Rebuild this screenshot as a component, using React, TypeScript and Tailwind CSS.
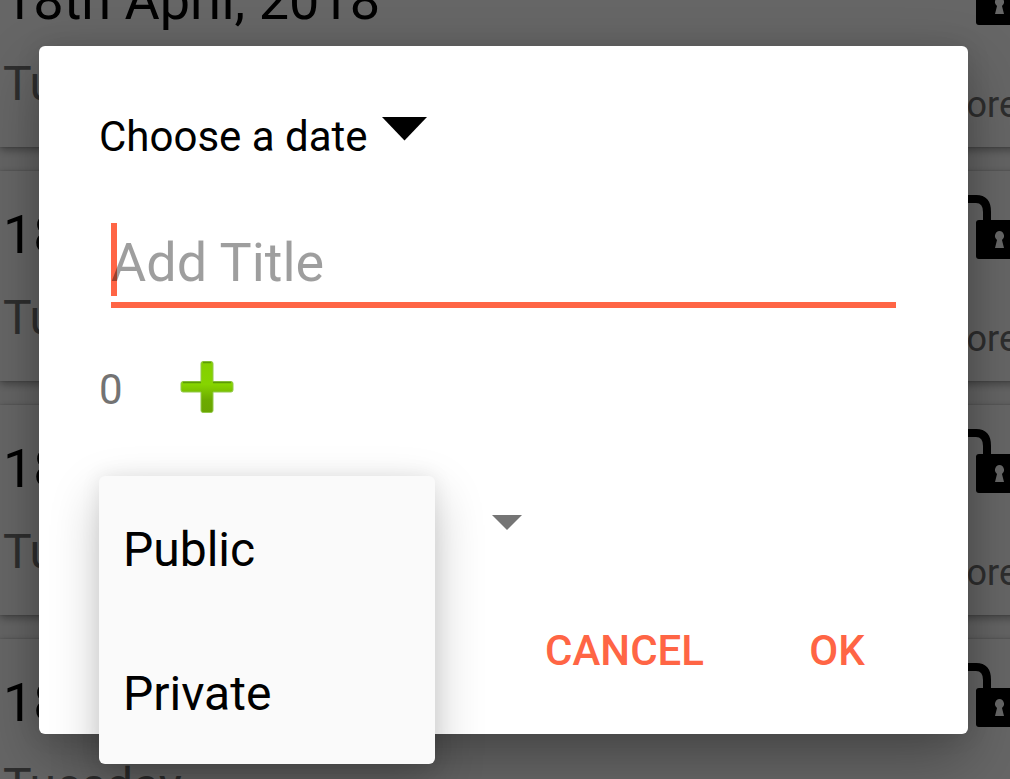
import React, { useState } from "react";

const ENTRIES = [1, 2, 3, 4];

function OpenLock() {
  return (
    <svg width="80" height="64" viewBox="0 0 80 64" aria-hidden="true">
      <path d="M4 26V14Q4 4 15 4H34Q45 4 45 17V28" fill="none" stroke="#000" strokeWidth="8" />
      <path
        fillRule="evenodd"
        d="M37 25H77Q80 25 80 28V61Q80 64 77 64H37Q34 64 34 61V28Q34 25 37 25ZM57.500 36A5 5 0 0 0 55 45L53 53H62L60 45A5 5 0 0 0 57.500 36Z"
      />
    </svg>
  );
}

function EntryCard() {
  return (
    <article className="flex justify-between bg-white pb-[18px] pl-[3px] shadow-[0_3px_8px_rgba(0,0,0,0.35),0_0_2px_rgba(0,0,0,0.2)]">
      <div className="flex flex-col gap-[19px] pt-8">
        <h2 className="text-[54px] leading-[64px] text-black">18th April, 2018</h2>
        <p className="text-[48px] leading-[64px] text-[#737373]">Tuesday</p>
      </div>
      <div className="flex flex-col items-end gap-14 pt-6">
        <OpenLock />
        <a href="#more" className="pr-1 text-[36px] leading-[48px] text-[#737373]">
          more
        </a>
      </div>
    </article>
  );
}

function PlusIcon() {
  return (
    <svg width="54" height="54" viewBox="0 0 54 54" aria-hidden="true">
      <defs>
        <linearGradient id="plus-fill" x1="0" y1="0" x2="0" y2="1">
          <stop offset="0" stopColor="#84cf00" />
          <stop offset="0.45" stopColor="#86d400" />
          <stop offset="0.75" stopColor="#6cab00" />
          <stop offset="1" stopColor="#6aa502" />
        </linearGradient>
      </defs>
      <path
        d="M23 1.500H31Q33 1.500 33 3.500V21.500H51Q53 21.500 53 23.500V30Q53 32 51 32H33V50.500Q33 52.500 31 52.500H23Q21 52.500 21 50.500V32H3Q1 32 1 30V23.500Q1 21.500 3 21.500H21V3.500Q21 1.500 23 1.500Z"
        fill="url(#plus-fill)"
        stroke="#93c94a"
        strokeWidth="1"
      />
      <path d="M23 2.500H31M3 22.500H21M33 22.500H51" stroke="#5c9a08" strokeWidth="1.500" />
    </svg>
  );
}

export default function App() {
  const [visibility, setVisibility] = useState("Public");
  return (
    <div className="relative h-screen overflow-hidden bg-[#fafafa] font-['Roboto',sans-serif]">
      <main className="-mt-[63px] -mr-3 flex flex-col gap-6">
        {ENTRIES.map((id) => (
          <EntryCard key={id} />
        ))}
      </main>

      <div className="absolute inset-0 bg-black/60 pt-[46px] pr-[42px] pl-[39px]">
        <form
          role="dialog"
          aria-label="New entry"
          onSubmit={(e) => e.preventDefault()}
          className="rounded-[6px] bg-white pt-[63px] pb-[46px] shadow-[0_24px_60px_rgba(0,0,0,0.3),0_0_24px_rgba(0,0,0,0.1)]"
        >
          <button type="button" className="ml-[60px] flex items-start gap-[14px] text-[42px] leading-[56px] text-black">
            Choose a date
            <svg width="45" height="24" viewBox="0 0 45 24" className="mt-2" aria-hidden="true">
              <path d="M0 0H45L22.500 23.500Z" />
            </svg>
          </button>

          <div className="relative mt-[58px] mr-[72px] ml-[72px]">
            <span className="absolute top-0 left-0 h-[73px] w-[6px] bg-[#ff6545]" />
            <input
              type="text"
              aria-label="Title"
              placeholder="Add Title"
              className="relative block h-[85px] w-full border-b-6 border-[#ff6545] bg-transparent text-[54px] text-black caret-transparent outline-none placeholder:text-black/38"
            />
          </div>

          <div className="mt-[52px] ml-[60px] flex items-start gap-[57px]">
            <span className="pt-[2px] text-[42px] leading-[56px] text-[#737373]">0</span>
            <button type="button" aria-label="Add">
              <PlusIcon />
            </button>
          </div>

          <div className="relative mt-[58px] ml-[60px]">
            <button
              type="button"
              aria-haspopup="listbox"
              aria-expanded="true"
              aria-label={"Visibility: " + visibility}
              className="flex h-[92px] w-[423px] items-center justify-end"
            >
              <svg width="30" height="15" viewBox="0 0 30 15" aria-hidden="true">
                <path d="M0 0H30L15 15Z" fill="#757575" />
              </svg>
            </button>
            <div
              role="listbox"
              aria-label="Visibility"
              className="absolute top-0 left-0 flex w-[336px] flex-col rounded-[6px] bg-[#fafafa] shadow-[0_20px_50px_rgba(0,0,0,0.22),0_0_20px_rgba(0,0,0,0.08)]"
            >
              {["Public", "Private"].map((option) => (
                <button
                  key={option}
                  type="button"
                  role="option"
                  aria-selected={visibility === option}
                  onClick={() => setVisibility(option)}
                  className="h-36 px-6 pt-1 text-left text-[48px] text-black"
                >
                  {option}
                </button>
              ))}
            </div>
          </div>

          <div className="mt-[46px] mr-[35px] mb-[2px] flex justify-end gap-[13px] text-[42px] font-medium text-[#ff6545]">
            <button type="button" className="h-[72px] px-6">
              CANCEL
            </button>
            <button type="submit" className="h-[72px] min-w-[192px] px-6">
              OK
            </button>
          </div>
        </form>
      </div>
    </div>
  );
}
